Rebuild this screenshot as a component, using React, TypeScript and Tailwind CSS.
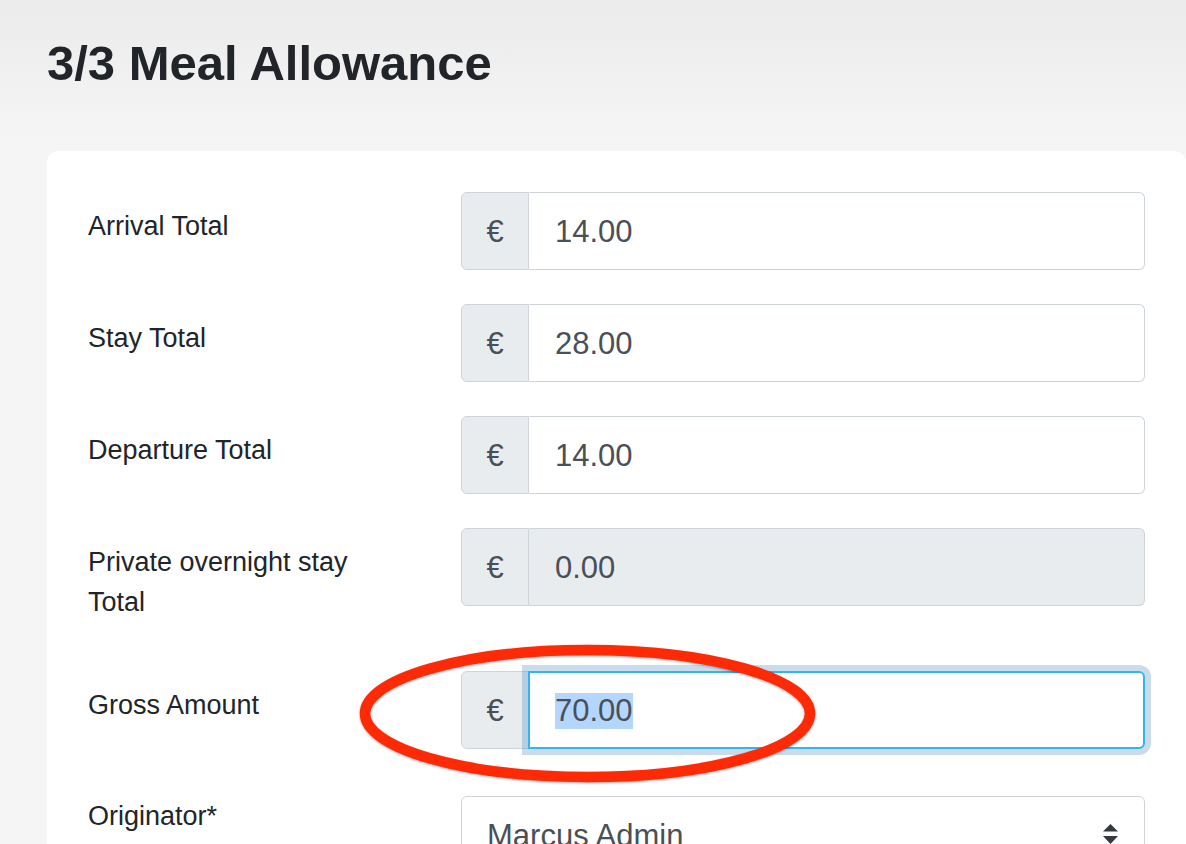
import React from 'react'

const font = "font-['Liberation_Sans',Arial,Helvetica,sans-serif]"

function Label({ text, className = '' }: { text: string; className?: string }) {
  return (
    <div className={`w-[373px] shrink-0 pr-[60px] text-[27px] leading-[40px] text-[#212529] ${className}`}>
      {text}
    </div>
  )
}

function MoneyField({ value, disabled = false, focused = false }: { value: string; disabled?: boolean; focused?: boolean }) {
  return (
    <div className="flex h-[78px] flex-1 text-[31px] text-[#495057]">
      <div className="flex w-[68px] shrink-0 items-center justify-center rounded-l-[6px] border border-[#ced4da] bg-[#e9ecef] pt-[2px]">
        €
      </div>
      {focused ? (
        <div className="relative z-10 -ml-px flex flex-1 items-center rounded-r-[6px] border-2 border-[#33b4f3] bg-white pl-[25px] pt-[2px] shadow-[0_0_0_6px_rgba(35,115,179,0.25)]">
          <span className="bg-[#b4d6fd] leading-[36px]">{value}</span>
        </div>
      ) : (
        <div
          className={`flex flex-1 items-center rounded-r-[6px] border border-l-0 border-[#ced4da] pl-[26px] pt-[2px] ${
            disabled ? 'bg-[#e9ecef]' : 'bg-white'
          }`}
        >
          {value}
        </div>
      )}
    </div>
  )
}

export default function App() {
  const rows = [
    { label: 'Arrival Total', value: '14.00' },
    { label: 'Stay Total', value: '28.00' },
    { label: 'Departure Total', value: '14.00' },
    { label: 'Private overnight stay Total', value: '0.00', disabled: true },
  ]

  return (
    <div
      className={`relative h-[844px] overflow-hidden bg-[linear-gradient(180deg,#ebebeb_0px,#f5f5f5_140px)] pl-[47px] pt-[39px] ${font}`}
    >
      <h1 className="text-[49px] font-bold leading-[49px] text-[#212529]">3/3 Meal Allowance</h1>

      {/* Form card */}
      <div className="mt-[63px] rounded-[12px] bg-white px-[41px] pt-[41px] pb-[40px]">
        {rows.map(r => (
          <div key={r.label} className="mb-[34px] flex">
            <Label text={r.label} className="pt-[14px] pb-[15px]" />
            <MoneyField value={r.value} disabled={r.disabled} />
          </div>
        ))}

        <div className="mb-[47px] flex">
          <Label text="Gross Amount" className="pt-[14px] pb-[15px]" />
          <MoneyField value="70.00" focused />
        </div>

        <div className="flex">
          <Label text="Originator*" className="pt-0" />
          <div className="relative flex h-[78px] flex-1 items-center rounded-[6px] border border-[#ced4da] bg-white pl-[25px] pt-[2px] text-[31px] text-[#495057]">
            Marcus Admin
            <svg
              className="absolute right-[26px] top-[27px]"
              width="15"
              height="20"
              viewBox="0 0 15 20"
              fill="#343a40"
            >
              <path d="M7.5 0 L15 7.5 L0 7.5 Z" />
              <path d="M0 12 L15 12 L7.5 20 Z" />
            </svg>
          </div>
        </div>
      </div>

      {/* Annotation */}
      <svg
        className="absolute left-[358px] top-[643px] z-20 drop-shadow-[0_1px_1px_rgba(0,0,0,0.35)]"
        width="460"
        height="142"
        viewBox="0 0 460 142"
      >
        <ellipse cx="229.5" cy="70.5" rx="222.5" ry="63.5" fill="none" stroke="#fe2a06" strokeWidth="10.5" />
      </svg>
    </div>
  )
}
